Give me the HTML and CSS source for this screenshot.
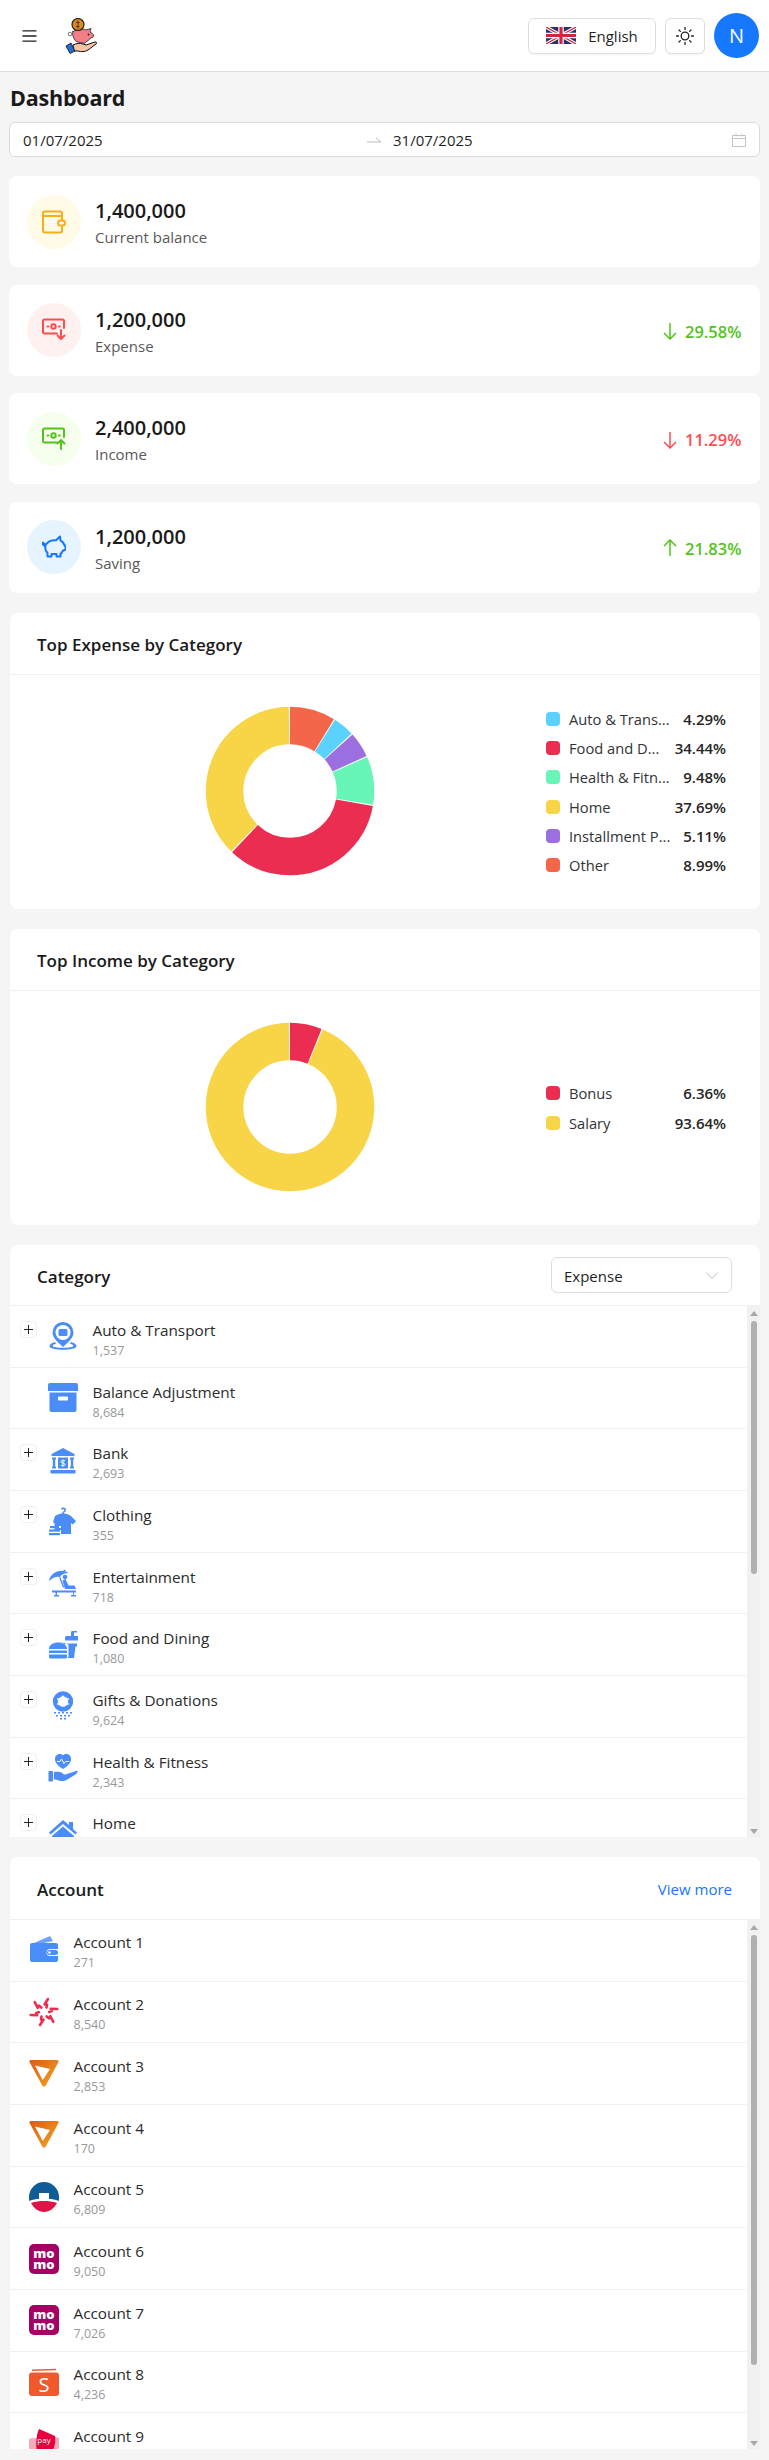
FILE: index.html
```html
<!DOCTYPE html>
<html lang="en">
<head>
<meta charset="utf-8">
<title>Dashboard</title>
<link rel="stylesheet" href="styles.css">
</head>
<body>
<header class="topbar">
  <svg class="menu-icon" viewBox="0 0 16 14"><path d="M0.5 1.5h15M0.5 7h15M0.5 12.5h15"/></svg>
  <svg class="logo" viewBox="0 0 32 36">
    <path d="M8 27c4-2 7-2 10-1l3 1 9-3c2-.5 2 1 1 2l-8 6c-3 2-7 2-10 1l-4 0z" fill="#f6c3a5" stroke="#111" stroke-width="1"/>
    <path d="M1 28l5-3 4 8-5 2.500z" fill="#1f6fd0" stroke="#111" stroke-width=".8"/>
    <path d="M8 14c3-3 9-4 13-2l5-1.500-1 3.500c2 1 3.500 2 3.500 4 0 1-1 2-3 2-1 2-3 3-5 4l-1 1.500-4-1c-3 0-5-1-6.500-4-1-2-2-5-1-7.500z" fill="#f27f88" stroke="#222" stroke-width=".8"/>
    <circle cx="13" cy="6.500" r="6" fill="#d98a1f" stroke="#222" stroke-width="1.200"/>
    <path d="M13 2.500v8M11 4.500h3.500M11 8.500h3.500" stroke="#5c3205" stroke-width="1" fill="none"/>
    <circle cx="5" cy="16" r="1.800" fill="none" stroke="#555" stroke-width=".8"/>
    <circle cx="23.500" cy="16.500" r=".9" fill="#222"/>
  </svg>
  <div class="topbar-actions">
    <button class="btn lang-btn">
      <svg class="flag" viewBox="0 0 30 17">
        <rect width="30" height="17" fill="#27306b"/>
        <path d="M0 0l30 17M30 0L0 17" stroke="#fff" stroke-width="3.400"/>
        <path d="M0 0l30 17M30 0L0 17" stroke="#d3233f" stroke-width="1.200"/>
        <path d="M15 0v17M0 8.500h30" stroke="#fff" stroke-width="5.500"/>
        <path d="M15 0v17M0 8.500h30" stroke="#d3233f" stroke-width="3.200"/>
      </svg>
      <span>English</span>
    </button>
    <button class="btn sun-btn">
      <svg class="sun" viewBox="0 0 18 18"><circle cx="9" cy="9" r="3.800"/><path d="M9 .5v2M9 15.500v2M.5 9h2M15.500 9h2M3 3l1.400 1.400M13.600 13.600L15 15M15 3l-1.400 1.400M4.400 13.600L3 15"/></svg>
    </button>
    <div class="avatar">N</div>
  </div>
</header>

<main class="page">
  <h1 class="page-title">Dashboard</h1>
  <div class="range">
    <span class="range-from">01/07/2025</span>
    <svg class="range-arrow" viewBox="0 0 14 6"><path d="M0 5h14L9 1"/></svg>
    <span class="range-to">31/07/2025</span>
    <svg class="range-cal" viewBox="0 0 14 14"><path d="M.5 2.500h13v11H.5zM.5 5.500h13M4 .5v3M10 .5v3"/></svg>
  </div>

  <section class="stat">
    <div class="stat-icon bg-yellow">
      <svg class="glyph" viewBox="0 0 24 24" stroke="#faad14"><rect x="1" y="1.500" width="19" height="21" rx="2"/><path d="M1 6h19"/><rect x="16" y="10.500" width="7" height="5" rx="2.500" fill="#fffbe6"/></svg>
    </div>
    <div class="stat-text"><div class="stat-value">1,400,000</div><div class="stat-label">Current balance</div></div>
  </section>

  <section class="stat">
    <div class="stat-icon bg-red">
      <svg class="glyph" viewBox="0 0 24 24" stroke="#ff4d4f"><path d="M15 15.500H2.500a1.500 1.500 0 0 1-1.500-1.500V3a1.500 1.500 0 0 1 1.500-1.500h18A1.500 1.500 0 0 1 22 3v7"/><circle cx="11.500" cy="8.500" r="2.200"/><path d="M5.500 8.500h.8M17 8.500h.8M19 12v9M15.500 17.500L19 21l3.500-3.500"/></svg>
    </div>
    <div class="stat-text"><div class="stat-value">1,200,000</div><div class="stat-label">Expense</div></div>
    <div class="trend up">
      <svg class="trend-arrow" viewBox="0 0 14 18"><path d="M7 1v16M1 11l6 6 6-6"/></svg>29.58%
    </div>
  </section>

  <section class="stat">
    <div class="stat-icon bg-green">
      <svg class="glyph" viewBox="0 0 24 24" stroke="#52c41a"><path d="M15 15.500H2.500a1.500 1.500 0 0 1-1.500-1.500V3a1.500 1.500 0 0 1 1.500-1.500h18A1.500 1.500 0 0 1 22 3v7"/><circle cx="11.500" cy="8.500" r="2.200"/><path d="M5.500 8.500h.8M17 8.500h.8M19 22v-9M15.500 16.500L19 13l3.500 3.500"/></svg>
    </div>
    <div class="stat-text"><div class="stat-value">2,400,000</div><div class="stat-label">Income</div></div>
    <div class="trend down">
      <svg class="trend-arrow" viewBox="0 0 14 18"><path d="M7 1v16M1 11l6 6 6-6"/></svg>11.29%
    </div>
  </section>

  <section class="stat stat-last">
    <div class="stat-icon bg-blue">
      <svg class="glyph" viewBox="0 0 24 24" stroke="#1677ff"><path d="M18 1.500l.5 4c2 1 3.500 3 4 5h1v4l-3 1.500-1 2.500h-1v3h-4v-2.500h-5v2.500h-4v-3.500C3.500 16 3 13 3.500 11 1.500 11 .5 9.500 1 7.500c1 1.500 2 2 3.500 1.500C6 6.500 9.500 5 14 5.200z"/></svg>
    </div>
    <div class="stat-text"><div class="stat-value">1,200,000</div><div class="stat-label">Saving</div></div>
    <div class="trend up">
      <svg class="trend-arrow" viewBox="0 0 14 18"><path d="M7 17V1M1 7l6-6 6 6"/></svg>21.83%
    </div>
  </section>

  <section class="card chart-card">
    <div class="card-head"><h2 class="card-title">Top Expense by Category</h2></div>
    <div class="chart-body">
      <svg class="donut" viewBox="0 0 170 170">
        <g transform="rotate(-90 85 85)" fill="none" stroke-width="37.500">
          <circle cx="85" cy="85" r="65.500" pathLength="100" stroke="#f4664a" stroke-dasharray="8.75 91.25"/>
          <circle cx="85" cy="85" r="65.500" pathLength="100" stroke="#5ad1ff" stroke-dasharray="4.05 95.95" stroke-dashoffset="-8.99"/>
          <circle cx="85" cy="85" r="65.500" pathLength="100" stroke="#9b6fe0" stroke-dasharray="4.87 95.13" stroke-dashoffset="-13.28"/>
          <circle cx="85" cy="85" r="65.500" pathLength="100" stroke="#68f5b8" stroke-dasharray="9.24 90.76" stroke-dashoffset="-18.39"/>
          <circle cx="85" cy="85" r="65.500" pathLength="100" stroke="#ea2d50" stroke-dasharray="34.2 65.8" stroke-dashoffset="-27.87"/>
          <circle cx="85" cy="85" r="65.500" pathLength="100" stroke="#f8d447" stroke-dasharray="37.45 62.55" stroke-dashoffset="-62.31"/>
        </g>
      </svg>
      <ul class="legend">
        <li class="legend-row"><i class="swatch sw-blue"></i><span class="legend-name">Auto &amp; Trans...</span><b class="legend-val">4.29%</b></li>
        <li class="legend-row"><i class="swatch sw-red"></i><span class="legend-name">Food and D...</span><b class="legend-val">34.44%</b></li>
        <li class="legend-row"><i class="swatch sw-green"></i><span class="legend-name">Health &amp; Fitn...</span><b class="legend-val">9.48%</b></li>
        <li class="legend-row"><i class="swatch sw-yellow"></i><span class="legend-name">Home</span><b class="legend-val">37.69%</b></li>
        <li class="legend-row"><i class="swatch sw-purple"></i><span class="legend-name">Installment P...</span><b class="legend-val">5.11%</b></li>
        <li class="legend-row"><i class="swatch sw-orange"></i><span class="legend-name">Other</span><b class="legend-val">8.99%</b></li>
      </ul>
    </div>
  </section>

  <section class="card chart-card">
    <div class="card-head"><h2 class="card-title">Top Income by Category</h2></div>
    <div class="chart-body">
      <svg class="donut" viewBox="0 0 170 170">
        <g transform="rotate(-90 85 85)" fill="none" stroke-width="37.500">
          <circle cx="85" cy="85" r="65.500" pathLength="100" stroke="#ea2d50" stroke-dasharray="6.12 93.88"/>
          <circle cx="85" cy="85" r="65.500" pathLength="100" stroke="#f8d447" stroke-dasharray="93.4 6.6" stroke-dashoffset="-6.36"/>
        </g>
      </svg>
      <ul class="legend">
        <li class="legend-row"><i class="swatch sw-red"></i><span class="legend-name">Bonus</span><b class="legend-val">6.36%</b></li>
        <li class="legend-row"><i class="swatch sw-yellow"></i><span class="legend-name">Salary</span><b class="legend-val">93.64%</b></li>
      </ul>
    </div>
  </section>

  <section class="card list-card">
    <div class="card-head">
      <h2 class="card-title">Category</h2>
      <div class="select"><span>Expense</span><svg class="chev" viewBox="0 0 12 7"><path d="M.5 .5L6 6.500 11.500 .5"/></svg></div>
    </div>
    <div class="scroller">
      <div class="rows">
        <div class="row"><span class="expand"></span><svg class="row-icon" viewBox="0 0 30 30"><path d="M15 1a10.500 10.500 0 0 0-10.500 10.500C4.500 17 10 21 15 26c5-5 10.500-9 10.500-14.500A10.500 10.500 0 0 0 15 1z"/><circle cx="15" cy="11.500" r="7.500" fill="#fff"/><rect x="10.500" y="8" width="9" height="7" rx="1.500"/><path d="M7 21c-3.500 1-5.500 2.500-5.500 4 0 2.500 6 3.800 13.500 3.800S28.500 27.500 28.500 25c0-1.500-2-3-5.500-4l-1.200 1.500c2 .6 3.500 1.500 3.500 2.500 0 1.200-4.500 1.800-10.300 1.800S4.700 26.200 4.700 25c0-1 1.500-1.900 3.500-2.500z"/></svg><div class="row-text"><div class="row-name">Auto &amp; Transport</div><div class="row-count">1,537</div></div></div>
        <div class="row"><span class="expand-gap"></span><svg class="row-icon" viewBox="0 0 30 30"><path d="M2 0h26a2 2 0 0 1 2 2v6H0V2a2 2 0 0 1 2-2zM1.500 9.500h27V27a2 2 0 0 1-2 2h-23a2 2 0 0 1-2-2z"/><rect x="10" y="13.500" width="10" height="4" rx="1" fill="#fff"/></svg><div class="row-text"><div class="row-name">Balance Adjustment</div><div class="row-count">8,684</div></div></div>
        <div class="row"><span class="expand"></span><svg class="row-icon" viewBox="0 0 30 30"><path d="M15 3l11.500 6v2h-23V9zM4 12.500h4v2H7.200v7H8v2H4v-2h.8v-7H4zM22 12.500h4v2h-.8v7h.8v2h-4v-2h.8v-7H22zM10 12.500h10v11H10zM2.500 25h25v3.500h-25z"/><path d="M15 14.500v7M17 16c-1-.8-4-.8-4 .8s4 1 4 2.600-3 1.600-4 .8" stroke="#fff" stroke-width="1" fill="none"/></svg><div class="row-text"><div class="row-name">Bank</div><div class="row-count">2,693</div></div></div>
        <div class="row"><span class="expand"></span><svg class="row-icon" viewBox="0 0 30 30"><path d="M13 3c1-2 5-2 5 1 0 2-2 2-2.300 3.500h-1.500c0-2 2.300-2.200 2.300-3.500 0-1-1.500-1-2-.2zM7 10c3-2 6-2.500 8-2.500s5 .5 8 2.500l5 5-3 3.500-2-1.500V28H13v-4H6.500v-2H13v-2H7l-1-1.500 1-.5-2-2z"/><rect x="2" y="20" width="9" height="2.200"/><rect x="1" y="23.500" width="11" height="2.200"/><rect x="1" y="27" width="11" height="2.200"/></svg><div class="row-text"><div class="row-name">Clothing</div><div class="row-count">355</div></div></div>
        <div class="row"><span class="expand"></span><svg class="row-icon" viewBox="0 0 30 30"><path d="M1 13C2 7 8 2 16 3c-1-.5 0-1.500 1-1 .5.300.5 1 .5 1.500 1 .3 2 .7 3 1.500-4 0-7 1.500-8.500 4-3-1-7 0-11 4z"/><path d="M12.500 9.500l4 10h-1.500l-4-10z"/><circle cx="17" cy="9" r="2.300"/><path d="M14.500 12.500l3-1.500 3 6.500h6l1.500 3.500H17zM4 22.500h24v2h-2v2.500h2v1.500h-5V27h2v-2.500H9V27h2v1.500H6V27h1.500v-2.500H4z"/></svg><div class="row-text"><div class="row-name">Entertainment</div><div class="row-count">718</div></div></div>
        <div class="row"><span class="expand"></span><svg class="row-icon" viewBox="0 0 30 30"><path d="M12 13c3-.5 5 .5 5 3v-2.500h12v3H27.500L26 28H19.500c1-.5 1-1.500 1-2.500V15c0-.5-4-3-8.500-2z"/><path d="M17 11V7.500c0-1 1-1.500 2-1.500h4V2.500c0-1 .5-1.500 1.500-1.500H29v1.500h-3V6h4v4.500H17zM1 19c0-4 4-6.500 9-6.500s9 2.500 9 6.500zM1 20.500h18v2.500H1zM1 24.500h18V27c0 .8-.7 1.500-1.500 1.500h-15C1.700 28.500 1 27.800 1 27z"/></svg><div class="row-text"><div class="row-name">Food and Dining</div><div class="row-count">1,080</div></div></div>
        <div class="row"><span class="expand"></span><svg class="row-icon" viewBox="0 0 30 30"><circle cx="15" cy="10.500" r="7.700" fill="none" stroke="#4b8df8" stroke-width="5"/><g fill="#fff"><circle cx="15" cy="5.500" r=".9"/><circle cx="20" cy="8" r=".9"/><circle cx="10" cy="8" r=".9"/><circle cx="20" cy="13" r=".9"/><circle cx="10" cy="13" r=".9"/></g><path d="M6 21h2v1.500H6zM10 21h2v1.500h-2zM14 21h2v1.500h-2zM18 21h2v1.500h-2zM22 21h2v1.500h-2zM8 24h2v1.500H8zM12 24h2v1.500h-2zM16 24h2v1.500h-2zM20 24h2v1.500h-2zM12 27h2v1.500h-2zM16 27h2v1.500h-2z"/></svg><div class="row-text"><div class="row-name">Gifts &amp; Donations</div><div class="row-count">9,624</div></div></div>
        <div class="row"><span class="expand"></span><svg class="row-icon" viewBox="0 0 30 30"><path d="M15 16C8 11.500 7 8.500 7 6c0-3 2-5 5-5 1.300 0 2.300.5 3 1.500C15.700 1.500 16.700 1 18 1c3 0 5 2 5 5 0 2.500-1 5.500-8 10z"/><path d="M9 8.500h3l1.500-2.500 2.500 4.500 1.500-2h3.500" stroke="#fff" fill="none" stroke-width="1"/><path d="M.5 18h3.500c.5 0 1 .4 1 1v8.500c0 .5-.5 1-1 1H.5zM6 19c3-.5 5-.5 7.500.5 1.500.5 1.500 2.500 4 2l12-4c.5 1.500-.5 3-2 4l-9 5.500c-2 1-5 1.500-7.500.5-1.500-.5-3-1-5-1z"/></svg><div class="row-text"><div class="row-name">Health &amp; Fitness</div><div class="row-count">2,343</div></div></div>
        <div class="row"><span class="expand"></span><svg class="row-icon" viewBox="0 0 30 30"><path transform="translate(0 4)" d="M15 1l6 5V3h4v7l4 3.500-1.500 2L15 5 2.500 15.500 1 13.500zM15 7.500L26 17v11H18v-7h-6v7H4V17z"/></svg><div class="row-text"><div class="row-name">Home</div></div></div>
      </div>
      <div class="scrollbar"><i class="tri-up"></i><i class="thumb"></i><i class="tri-down"></i></div>
    </div>
  </section>

  <section class="card list-card account-card">
    <div class="card-head">
      <h2 class="card-title">Account</h2>
      <a class="view-more" href="#">View more</a>
    </div>
    <div class="scroller">
      <div class="rows accounts">
        <div class="row"><svg class="row-icon" viewBox="0 0 30 30"><path d="M5 8L21 1l3 5-14 3z" fill="#6ea2fb"/><path d="M3 8h24a2 2 0 0 1 2 2v4h-8a3.500 3.500 0 0 0 0 7h8v4a2 2 0 0 1-2 2H3a2 2 0 0 1-2-2V10a2 2 0 0 1 2-2z"/><rect x="18" y="15" width="11" height="5" rx="2.500"/><circle cx="20.500" cy="17.500" r="1.300" fill="#fff"/></svg><div class="row-text"><div class="row-name">Account 1</div><div class="row-count">271</div></div></div>
        <div class="row"><svg class="row-icon" viewBox="0 0 30 30"><defs><path id="arm" d="M19 2l-3.500 5.500M17.500 10.500l.5 -3"/></defs><g fill="none" stroke="#ee2c4e" stroke-width="2.600" stroke-linecap="round"><use href="#arm"/><use href="#arm" transform="rotate(60 15 15)"/><use href="#arm" transform="rotate(120 15 15)"/><use href="#arm" transform="rotate(180 15 15)"/><use href="#arm" transform="rotate(240 15 15)"/><use href="#arm" transform="rotate(300 15 15)"/></g></svg><div class="row-text"><div class="row-name">Account 2</div><div class="row-count">8,540</div></div></div>
        <div class="row"><svg class="row-icon" viewBox="0 0 30 30"><defs><linearGradient id="tri" x1="0" y1="0" x2="1" y2="1"><stop offset="0" stop-color="#d85a1c"/><stop offset="1" stop-color="#f6a81c"/></linearGradient></defs><path d="M2 1h26c1.500 0 2 1 1.500 2L17 26c-1 2-3 2-4 0L.5 3C0 2 .5 1 2 1zM6 6.500l15 3.500-7.300 11z" fill="url(#tri)" fill-rule="evenodd"/></svg><div class="row-text"><div class="row-name">Account 3</div><div class="row-count">2,853</div></div></div>
        <div class="row"><svg class="row-icon" viewBox="0 0 30 30"><path d="M2 1h26c1.500 0 2 1 1.500 2L17 26c-1 2-3 2-4 0L.5 3C0 2 .5 1 2 1zM6 6.500l15 3.500-7.300 11z" fill="url(#tri)" fill-rule="evenodd"/></svg><div class="row-text"><div class="row-name">Account 4</div><div class="row-count">170</div></div></div>
        <div class="row"><svg class="row-icon" viewBox="0 0 30 30"><path d="M15 0a15 15 0 0 1 15 15v4c-4-1.500-7-2-10-2v-6H10v6c-3 0-6 .5-10 2v-4A15 15 0 0 1 15 0z" fill="#0f5c96"/><path d="M2 21c4-1.500 9-2 13-2s9 .5 13 2c-2.500 5-7.500 9-13 9S4.500 26 2 21z" fill="#dd1446"/></svg><div class="row-text"><div class="row-name">Account 5</div><div class="row-count">6,809</div></div></div>
        <div class="row"><svg class="row-icon momo" viewBox="0 0 30 30"><rect width="30" height="30" rx="5" fill="#a50064"/><text x="15" y="14">mo</text><text x="15" y="25">mo</text></svg><div class="row-text"><div class="row-name">Account 6</div><div class="row-count">9,050</div></div></div>
        <div class="row"><svg class="row-icon momo" viewBox="0 0 30 30"><rect width="30" height="30" rx="5" fill="#a50064"/><text x="15" y="14">mo</text><text x="15" y="25">mo</text></svg><div class="row-text"><div class="row-name">Account 7</div><div class="row-count">7,026</div></div></div>
        <div class="row"><svg class="row-icon shopee" viewBox="0 0 30 30"><path d="M3 2.500l24-.8.200 1.500-24 .8z" fill="#f1582c"/><rect y="5.500" width="30" height="23.500" rx="3" fill="#f1582c"/><text x="15" y="25">S</text></svg><div class="row-text"><div class="row-name">Account 8</div><div class="row-count">4,236</div></div></div>
        <div class="row"><svg class="row-icon pay" viewBox="0 0 30 30"><path d="M0 10c2-1 5-1 7-1l4 18c-5 0-9-3-11-8zM30 9c-2-1-4-1-6-1l-2 19c4-1 7-4 8-9z" fill="#f7a9b8"/><path d="M10 0l16 7c1 6-1 15-6 20-4 2-8 1-11-1C6 18 7 6 10 0z" fill="#e8003d"/><text x="15" y="14">pay</text></svg><div class="row-text"><div class="row-name">Account 9</div></div></div>
      </div>
      <div class="scrollbar"><i class="tri-up"></i><i class="thumb"></i><i class="tri-down"></i></div>
    </div>
  </section>
</main>
</body>
</html>
```

FILE: styles.css
```css
* { box-sizing: border-box; }
html, body { margin: 0; padding: 0; }
body {
  width: 769px;
  height: 2460px;
  overflow: hidden;
  background: #f5f5f5;
  color: #1f1f1f;
  font-family: "Open Sans", "Noto Sans", sans-serif;
  font-size: 15px;
}
h1, h2, ul { margin: 0; padding: 0; }
ul { list-style: none; }
button { font: inherit; color: inherit; padding: 0; cursor: pointer; }

.topbar {
  height: 72px;
  background: #fff;
  border-bottom: 1px solid #e0e0e0;
  display: flex;
  align-items: center;
  padding: 0 10px 0 22px;
}
.menu-icon { width: 15px; height: 14px; fill: none; stroke: #222; stroke-width: 1.5; }
.logo { width: 32px; height: 36px; margin-left: 28px; }
.topbar-actions { margin-left: auto; display: flex; align-items: center; gap: 9px; }
.btn {
  height: 36px;
  background: #fff;
  border: 1px solid #dedede;
  border-radius: 6px;
  box-shadow: 0 2px 0 rgba(0, 0, 0, .02);
  display: flex;
  align-items: center;
  justify-content: center;
}
.lang-btn { width: 128px; gap: 12px; font-size: 15px; }
.flag { width: 30px; height: 17px; }
.sun-btn { width: 40px; }
.sun { width: 18px; height: 18px; fill: none; stroke: #222; stroke-width: 1.3; stroke-linecap: round; }
.avatar {
  width: 45px;
  height: 45px;
  border-radius: 50%;
  background: #1677ff;
  color: #fff;
  font-size: 20px;
  display: flex;
  align-items: center;
  justify-content: center;
}

.page { padding: 0 9px 0 10px; }
.page-title { font-size: 21.500px; font-weight: 700; line-height: 28px; margin: 12px 0 10px; color: #1a1a1a; letter-spacing: -.2px; }
.range {
  height: 35px;
  margin: 0 0 19px -1px;
  background: #fff;
  border: 1px solid #dcdcdc;
  border-radius: 6px;
  display: flex;
  align-items: center;
  padding: 0 13px;
  font-size: 15px;
}
.range-from { width: 344px; }
.range-arrow { width: 14px; height: 6px; fill: none; stroke: #bdbdbd; stroke-width: 1; margin-right: 12px; }
.range-cal { width: 14px; height: 14px; margin-left: auto; fill: none; stroke: #c4c4c4; stroke-width: 1; }

.stat {
  height: 91px;
  margin: 0 0 17.670px -1px;
  background: #fff;
  border-radius: 8px;
  display: flex;
  align-items: center;
  padding: 0 18.500px 0 18px;
}
.stat-last { margin-bottom: 20px; }
.stat-icon {
  width: 54px;
  height: 54px;
  border-radius: 50%;
  flex: none;
  display: flex;
  align-items: center;
  justify-content: center;
}
.bg-yellow { background: #fffbe6; }
.bg-red { background: #fff1f0; }
.bg-green { background: #f6ffed; }
.bg-blue { background: #e6f4ff; }
.glyph { width: 24px; height: 24px; fill: none; stroke-width: 2; stroke-linecap: round; stroke-linejoin: round; }
.stat-text { margin: 3px 0 0 14px; }
.stat-value { font-size: 20px; font-weight: 600; line-height: 26px; color: #1a1a1a; }
.stat-label { font-size: 15px; line-height: 22px; color: #595959; margin-top: 2px; }
.trend { margin: 2px 0 0 auto; display: flex; align-items: center; gap: 8px; font-size: 16.500px; font-weight: 600; }
.trend.up { color: #52c41a; }
.trend.down { color: #ff4d4f; }
.trend-arrow { width: 14px; height: 18px; fill: none; stroke: currentColor; stroke-width: 1.5; }

.card { background: #fff; border-radius: 8px; }
.chart-card { height: 296px; margin-bottom: 20px; }
.card-head {
  height: 62px;
  border-bottom: 1px solid #f0f0f0;
  display: flex;
  align-items: center;
  justify-content: space-between;
  padding: 0 28px 0 27px;
}
.card-title { font-size: 17px; font-weight: 600; color: #1a1a1a; margin-top: 3px; }
.chart-body { display: flex; align-items: center; height: 233px; padding-left: 195px; }
.donut { width: 170px; height: 170px; flex: none; }
.legend { width: 180px; margin-left: 171px; padding-top: 1px; display: flex; flex-direction: column; gap: 9px; }
.legend-row { display: flex; align-items: center; height: 20.200px; }
.swatch { width: 14px; height: 14px; border-radius: 4px; flex: none; margin-right: 9px; }
.sw-blue { background: #5ad1ff; }
.sw-red { background: #ea2d50; }
.sw-green { background: #68f5b8; }
.sw-yellow { background: #f8d447; }
.sw-purple { background: #9b6fe0; }
.sw-orange { background: #f4664a; }
.legend-name { font-size: 14.700px; color: #333; }
.legend-val { margin-left: auto; font-size: 15px; font-weight: 600; color: #262626; }

.list-card { margin-bottom: 20px; border-radius: 8px 8px 0 0; height: 592px; overflow: hidden; }
.list-card .card-head { height: 61px; }
.account-card .card-head { height: 63px; }
.account-card .scroller { height: 529px; }
.account-card .thumb { height: 430px; }
.select {
  width: 181px;
  height: 36px;
  border: 1px solid #dedede;
  border-radius: 6px;
  display: flex;
  align-items: center;
  justify-content: space-between;
  padding: 2px 13px 0 12px;
  font-size: 15px;
}
.chev { width: 12px; height: 7px; fill: none; stroke: #bfbfbf; stroke-width: 1; }
.view-more { color: #1677ff; text-decoration: none; font-size: 15px; margin-top: 2px; }
.scroller { display: flex; height: 531px; }
.rows { flex: 1; overflow: hidden; min-width: 0; }
.row {
  height: 61.700px;
  border-bottom: 1px solid #f0f0f0;
  display: flex;
  align-items: center;
  padding-left: 10px;
}
.accounts .row { padding-left: 19px; }
.expand {
  width: 17px;
  height: 17px;
  flex: none;
  align-self: flex-start;
  margin-top: 15px;
  border: 1px solid #f0f0f0;
  border-radius: 4px;
  background:
    linear-gradient(#222, #222) center / 9px 1px no-repeat,
    linear-gradient(#222, #222) center / 1px 9px no-repeat;
}
.expand-gap { width: 17px; flex: none; }
.row-icon { width: 30px; height: 30px; flex: none; margin-left: 11px; fill: #4b8df8; }
.accounts .row-icon { margin-left: 0; }
.row-text { margin: 14px 0 0 14.500px; align-self: flex-start; }
.accounts .row-text { margin-top: 12.500px; }
.row-name { font-size: 15.300px; line-height: 20px; font-weight: 500; color: #2b2b2b; }
.row-count { font-size: 12.500px; line-height: 20px; color: #999; margin-top: 1px; }
.momo text { fill: #fff; font-size: 13px; font-weight: 800; text-anchor: middle; }
.shopee text { fill: #fff; font-size: 20px; text-anchor: middle; }
.pay text { fill: #fff; font-size: 8px; text-anchor: middle; }
.scrollbar {
  width: 13px;
  flex: none;
  background: #f1f1f1;
  display: flex;
  flex-direction: column;
  align-items: center;
  padding: 5px 0 3px;
}
.tri-up, .tri-down { width: 0; height: 0; border-left: 4px solid transparent; border-right: 4px solid transparent; }
.tri-up { border-bottom: 5px solid #a8a8a8; }
.tri-down { border-top: 5px solid #a8a8a8; margin-top: auto; }
.thumb { width: 6px; height: 253px; margin-top: 5px; background: #b0b0b0; border-radius: 3px; }
```
